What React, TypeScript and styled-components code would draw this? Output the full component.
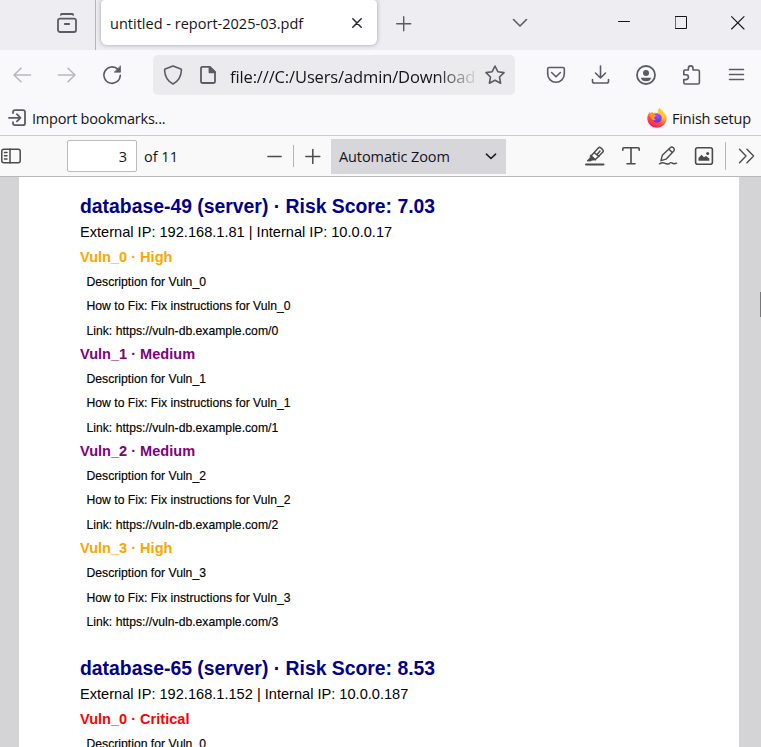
import React from "react";
import styled, { createGlobalStyle } from "styled-components";

const Global = createGlobalStyle`
  * { box-sizing: border-box; }
  html, body { margin: 0; padding: 0; overflow: hidden; }
  body { background: #d4d4d7; }
`;

const Window = styled.div`
  width: 761px;
  height: 747px;
  display: flex;
  flex-direction: column;
  overflow: hidden;
  font-family: "Open Sans", "Noto Sans", sans-serif;
  color: #15141a;
`;

const Bar = styled.div`
  display: flex;
  align-items: center;
  flex: none;
  white-space: nowrap;
`;
const TabBar = styled(Bar)`
  height: 50px;
  background: #ededf2;
  align-items: flex-start;
`;
const NavBar = styled(Bar)`
  height: 50px;
  background: #f9f9fb;
`;
const BookmarkBar = styled(Bar)`
  height: 36px;
  background: #f9f9fb;
  border-bottom: 1px solid #cccccd;
`;
const PdfBar = styled(Bar)`
  height: 41px;
  background: #f9f9fa;
  border-bottom: 1px solid #b8b8b8;
`;

const Glyph = styled.svg<{ $gap?: number; $top?: number; $color?: string; $stroke?: number | string }>`
  flex: none;
  display: block;
  margin-left: ${(p) => p.$gap ?? 0}px;
  margin-top: ${(p) => p.$top ?? 0}px;
  fill: none;
  stroke: ${(p) => p.$color ?? "#5b5b66"};
  stroke-width: ${(p) => p.$stroke ?? 1.6};
  stroke-linecap: round;
  stroke-linejoin: round;
`;

type IconProps = {
  gap?: number;
  top?: number;
  color?: string;
  stroke?: number;
  size?: number;
  children: React.ReactNode;
};
const Icon = ({ gap, top, color, stroke, size = 20, children }: IconProps) => (
  <Glyph width={size} height={size} viewBox={`0 0 ${size} ${size}`} $gap={gap} $top={top} $color={color} $stroke={stroke}>
    {children}
  </Glyph>
);

const Divider = styled.div<{ $gap: number; $height: number; $color?: string }>`
  flex: none;
  width: 1px;
  height: ${(p) => p.$height}px;
  margin-left: ${(p) => p.$gap}px;
  background: ${(p) => p.$color ?? "#b5b5b8"};
`;

const Tab = styled.div`
  flex: none;
  display: flex;
  align-items: center;
  width: 276px;
  height: 45px;
  margin-left: 5px;
  padding: 2px 0 0 9px;
  background: #fff;
  border-radius: 4px 4px 6px 6px;
  box-shadow: 0 0 4px rgba(80, 80, 100, 0.5);
`;
const TabTitle = styled.span`
  width: 235px;
  font-size: 14.5px;
  letter-spacing: 0.01px;
`;

const UrlField = styled.div`
  flex: none;
  display: flex;
  align-items: center;
  width: 362px;
  height: 40px;
  margin-left: 31px;
  border-radius: 5px;
  background: #ebebed;
`;
const UrlText = styled.span`
  flex: none;
  width: 246px;
  margin: 3px 0 0 11px;
  overflow: hidden;
  font-size: 16.5px;
  letter-spacing: -0.13px;
  mask-image: linear-gradient(to right, #000 205px, transparent 250px);
`;

const Label = styled.span<{ $gap: number; $width: number; $spacing?: number }>`
  flex: none;
  width: ${(p) => p.$width}px;
  margin-left: ${(p) => p.$gap}px;
  margin-top: 1px;
  font-size: 14.5px;
  letter-spacing: ${(p) => p.$spacing ?? -0.2}px;
`;

const PageInput = styled.div`
  flex: none;
  width: 70px;
  height: 32px;
  margin-left: 46px;
  padding-right: 9px;
  border: 1px solid #bbbbbc;
  border-radius: 2px;
  background: #fff;
  font-size: 14.5px;
  line-height: 32px;
  text-align: right;
`;
const ZoomSelect = styled.div`
  flex: none;
  display: flex;
  align-items: center;
  width: 175px;
  height: 35px;
  margin-left: 10px;
  background: #d7d7db;
`;

const Viewer = styled.div`
  position: relative;
  flex: 1;
  min-height: 0;
  padding: 0 22px 0 19px;
  background: #d4d4d7;
  overflow: hidden;
`;
const ScrollThumb = styled.div`
  position: absolute;
  top: 115px;
  right: 0;
  width: 1px;
  height: 25px;
  background: #77777a;
`;
const Page = styled.div`
  height: 100%;
  padding: 16px 0 0 61px;
  background: #fff;
  overflow: hidden;
  font-family: "Liberation Sans", Arial, sans-serif;
  color: #000;
  white-space: nowrap;
`;
const Host = styled.section`
  height: 462px;
`;
const HostTitle = styled.h2`
  margin: 0;
  height: 26px;
  line-height: 26px;
  font-size: 19.37px;
  font-weight: 700;
  color: #00008b;
`;
const Address = styled.p`
  margin: 0;
  height: 25px;
  line-height: 26px;
  font-size: 14.6px;
`;
const Vuln = styled.article`
  height: 97.1px;
`;
const VulnTitle = styled.h3<{ $color: string }>`
  margin: 0;
  height: 25px;
  line-height: 26px;
  font-size: 14.55px;
  font-weight: 700;
  color: ${(p) => p.$color};
`;
const Detail = styled.p`
  margin: 0 0 0 6.5px;
  height: 24.3px;
  line-height: 27px;
  font-size: 12.2px;
  -webkit-text-stroke: 0.15px #000;
`;

const severityColor: Record<string, string> = {
  High: "#ffa500",
  Medium: "#800080",
  Critical: "#ff0000",
};

const hosts = [
  { name: "database-49", score: "7.03", external: "192.168.1.81", internal: "10.0.0.17", levels: ["High", "Medium", "Medium", "High"] },
  { name: "database-65", score: "8.53", external: "192.168.1.152", internal: "10.0.0.187", levels: ["Critical"] },
];

const Firefox = () => (
  <Glyph width={20} height={20} viewBox="0 0 20 20" $stroke={0} $color="none">
    <defs>
      <linearGradient id="flame" x1="0.8" y1="0" x2="0.25" y2="1">
        <stop offset="0" stopColor="#fff04a" />
        <stop offset="0.35" stopColor="#ffb52e" />
        <stop offset="0.65" stopColor="#ff5038" />
        <stop offset="1" stopColor="#f0127a" />
      </linearGradient>
      <radialGradient id="globe" cx="0.6" cy="0.25" r="0.8">
        <stop offset="0" stopColor="#a84dff" />
        <stop offset="1" stopColor="#5537c8" />
      </radialGradient>
    </defs>
    <path fill="url(#flame)" d="M12.8 0C15 1.5 16 3 16.7 4.6C18.7 6 19.8 8.2 19.7 10.8A9.7 8.9 0 0 1 .3 11C.2 8 1.3 5.8 2.9 3.7L3.5 5.5L5.3 3.6L6 5.2C8 4.4 10 4.8 10.8 5.4C10.7 3 11.4 1.3 12.8 0Z" />
    <circle cx="10.2" cy="10" r="4.5" fill="url(#globe)" />
    <path fill="#ff9526" d="M2.8 5.6L6 5.5C7 6.8 8.2 7 9.7 7.1C9.4 8.2 8.5 8.6 7.5 9C7 10 7.5 11.3 8.9 11.7C7 12.8 4.8 12 4.3 10C2.8 9.2 2.5 7.2 2.8 5.6Z" />
    <path fill="#ffc832" d="M11 5.7C14.5 6.2 16.4 9 14.8 12C18 9.8 17.9 6.4 15.7 4.4C14.9 3.6 13.4 2.7 12.8 0C11.4 1.2 10.7 3.2 11 5.7Z" />
  </Glyph>
);

export default function App() {
  return (
    <>
      <Global />
      <Window>
        <TabBar>
          <Icon gap={57} top={13} stroke={1.8}>
            <rect x="1" y="5.6" width="18" height="13.4" rx="2" />
            <path d="M3.8 1.8Q4.2 1 5 1H15Q15.8 1 16.2 1.8M7.8 11H12.2" />
          </Icon>
          <Divider $gap={18} $height={50} />
          <Tab>
            <TabTitle>untitled - report-2025-03.pdf</TabTitle>
            <Icon gap={7} top={-2} size={10} color="#2b2a33" stroke={1.5}>
              <path d="M.8 .8L9.2 9.2M9.2 .8L.8 9.2" />
            </Icon>
          </Tab>
          <Icon gap={19} top={16} size={16} stroke={1.4}>
            <path d="M.7 7.7H14.7M7.7 .7V14.7" />
          </Icon>
          <Icon gap={100} top={15} size={16}>
            <path d="M1.5 4.5L8 11L14.5 4.5" />
          </Icon>
          <Icon gap={90} top={15} size={14} color="#15141a" stroke={1}>
            <path d="M.5 6.5H11.5" />
          </Icon>
          <Icon gap={43} top={16} size={13} color="#15141a" stroke={1}>
            <path d="M.5 .5H11.5V12.5H.5Z" />
          </Icon>
          <Icon gap={43} top={16} size={14} color="#15141a" stroke={1.1}>
            <path d="M.6 .6L13 13M13 .6L.6 13" />
          </Icon>
        </TabBar>

        <NavBar>
          <Icon gap={12} color="#b8b8bf"><path d="M2 10H18.5M9 3.2L2 10L9 16.8" /></Icon>
          <Icon gap={25} color="#b8b8bf"><path d="M1.5 10H18M11 3.2L18 10L11 16.8" /></Icon>
          <Icon gap={25} stroke={1.6}>
            <path d="M18.3 10.3A8.2 8.2 0 1 1 15.8 4.2" />
            <path d="M18.5 1.2V7.2H12.5Z" fill="#5b5b66" strokeWidth=".7" />
          </Icon>
          <UrlField>
            <Icon gap={10}>
              <path d="M10 .9L17.8 4Q18.5 4.4 18.4 5.2Q18 14.8 10 19Q2 14.8 1.6 5.2Q1.5 4.4 2.2 4Z" />
            </Icon>
            <Icon gap={16} stroke={1.8}>
              <path d="M3 1.8H10.8L16 7V16.2Q16 18 14.2 18H3.8Q2 18 2 16.2V3.5Q2 1.8 3.7 1.8" />
              <path d="M10.5 2V7.3H16Z" fill="#5b5b66" />
            </Icon>
            <UrlText>file:///C:/Users/admin/Download</UrlText>
            <Icon gap={9} stroke={1.6}>
              <path d="M10 1L12.8 6.7L19 7.6L14.5 12L15.6 18.2L10 15.3L4.4 18.2L5.5 12L1 7.6L7.2 6.7Z" />
            </Icon>
          </UrlField>
          <Icon gap={31} stroke={1.6}>
            <path d="M3 2.5H17Q18.3 2.5 18.3 3.8V9A8.3 8.3 0 0 1 1.7 9V3.8Q1.7 2.5 3 2.5ZM5.6 7.5L10 11.8L14.4 7.5" />
          </Icon>
          <Icon gap={25} stroke={1.6}>
            <path d="M9.5 1V13M4.5 8L9.5 13L14.5 8M1.5 14.5V16.2Q1.5 18 3.3 18H15.7Q17.5 18 17.5 16.2V14.5" />
          </Icon>
          <Icon gap={25} stroke={1.8}>
            <circle cx="10" cy="10" r="9" />
            <circle cx="10" cy="8" r="3" fill="#5b5b66" stroke="none" />
            <path d="M4.8 12.8H15.2Q14.4 16.3 10 16.3Q5.6 16.3 4.8 12.8Z" fill="#5b5b66" stroke="none" />
          </Icon>
          <Icon gap={26} stroke={1.6}>
            <path d="M1.8 8.2V6Q1.8 5 3 5H6.4V3.2A2.3 2.3 0 0 1 11 3.2V5H15.8Q17.4 5 17.4 6.6V17.5Q17.4 19 15.9 19H3.2Q1.8 19 1.8 17.6V14.6H4A2.4 2.4 0 0 0 4 9.8H1.8Z" />
          </Icon>
          <Icon gap={26} stroke={1.5}><path d="M1.5 4.5H15.5M1.5 9.5H15.5M1.5 14.5H15.5" /></Icon>
        </NavBar>

        <BookmarkBar>
          <Icon gap={8} stroke={1.8}>
            <path d="M5 5V4.2Q5 2.2 7 2.2H15Q17 2.2 17 4.2V15.2Q17 17.2 15 17.2H7Q5 17.2 5 15.2V14.2M1 9.8H12.5M8.9 6.2L12.5 9.8L8.9 13.4" />
          </Icon>
          <Label $gap={4} $width={140}>Import bookmarks...</Label>
          <Label as="div" $gap={475} $width={20}><Firefox /></Label>
          <Label $gap={5} $width={86}>Finish setup</Label>
        </BookmarkBar>

        <PdfBar>
          <Icon gap={1} color="#4b4b4b" stroke={1.5}>
            <rect x=".8" y="3.2" width="18.4" height="13.6" rx="2" />
            <path d="M9 3.2V16.8M3.5 6.5H6M3.5 9.8H6M3.5 13H6" />
          </Icon>
          <PageInput>3</PageInput>
          <Label $gap={7} $width={40} $spacing={0}>of 11</Label>
          <Icon gap={83} size={16} color="#4b4b4b" stroke={1.3}><path d="M.8 8.5H14.2" /></Icon>
          <Divider $gap={10} $height={22} />
          <Icon gap={11} size={16} color="#4b4b4b" stroke={1.5}><path d="M.8 8.5H14.8M7.8 1.5V15.5" /></Icon>
          <ZoomSelect>
            <Label $gap={8} $width={146} $spacing={-0.1}>Automatic Zoom</Label>
            <Icon size={12} color="#1d1d21" stroke={1.6}><path d="M1.4 4.2L6 8.5L10.6 4.2" /></Icon>
          </ZoomSelect>
          <Icon gap={79} color="#4b4b4b" stroke={1.5}>
            <path d="M1 18.5H18.5" strokeWidth="2" />
            <path d="M6 10L13.3 2Q14.6 .8 16 2L17.7 3.6Q18.8 5 17.6 6.2L10.2 13.7ZM9.2 6.7L14 10.5M12.5 8L15 5" />
            <path d="M5.8 9.2L10.7 13.8L6.8 14.2L5.9 15H2L4.8 12Z" fill="#4b4b4b" strokeWidth=".8" />
          </Icon>
          <Icon gap={16} color="#4b4b4b" stroke={1.6}>
            <path d="M1.8 4.3V2.8Q1.8 1.8 2.8 1.8H17.2Q18.2 1.8 18.2 2.8V4.3M10 1.8V17.7M6 17.7H14" />
          </Icon>
          <Icon gap={17} color="#4b4b4b" stroke={1.4}>
            <path d="M3 14.7L4.3 9.3L12.2 1.7Q13.8 .4 15.4 1.8Q17.1 3.5 15.6 5.3L8 13.2ZM11 3.2L14.3 6.5M1.5 17.8Q4.4 16.1 6.5 17.2T11.2 17.8Q12.7 15.9 14.2 17.1T18.6 17.2" />
          </Icon>
          <Icon gap={16} color="#4b4b4b" stroke={1.6}>
            <rect x="1.6" y="1.8" width="16.8" height="16.4" rx="2" />
            <path d="M4.5 14.8V12L7.5 8.8L10 11.2L12 10L15.3 12.5V14.8Z" fill="#4b4b4b" stroke="none" />
            <circle cx="13.7" cy="7.4" r="1.5" fill="#4b4b4b" stroke="none" />
          </Icon>
          <Divider $gap={11} $height={28} />
          <Icon gap={12} color="#4b4b4b" stroke={1.4}><path d="M1.5 3.3L8 10L1.5 16.7M9 3.3L15.6 10L9 16.7" /></Icon>
        </PdfBar>

        <Viewer>
          <Page>
            {hosts.map((host) => (
              <Host key={host.name}>
                <HostTitle>{host.name} (server) · Risk Score: {host.score}</HostTitle>
                <Address>External IP: {host.external} | Internal IP: {host.internal}</Address>
                {host.levels.map((level, i) => (
                  <Vuln key={i}>
                    <VulnTitle $color={severityColor[level]}>Vuln_{i} · {level}</VulnTitle>
                    <Detail>Description for Vuln_{i}</Detail>
                    <Detail>How to Fix: Fix instructions for Vuln_{i}</Detail>
                    <Detail>Link: https://vuln-db.example.com/{i}</Detail>
                  </Vuln>
                ))}
              </Host>
            ))}
          </Page>
          <ScrollThumb />
        </Viewer>
      </Window>
    </>
  );
}
